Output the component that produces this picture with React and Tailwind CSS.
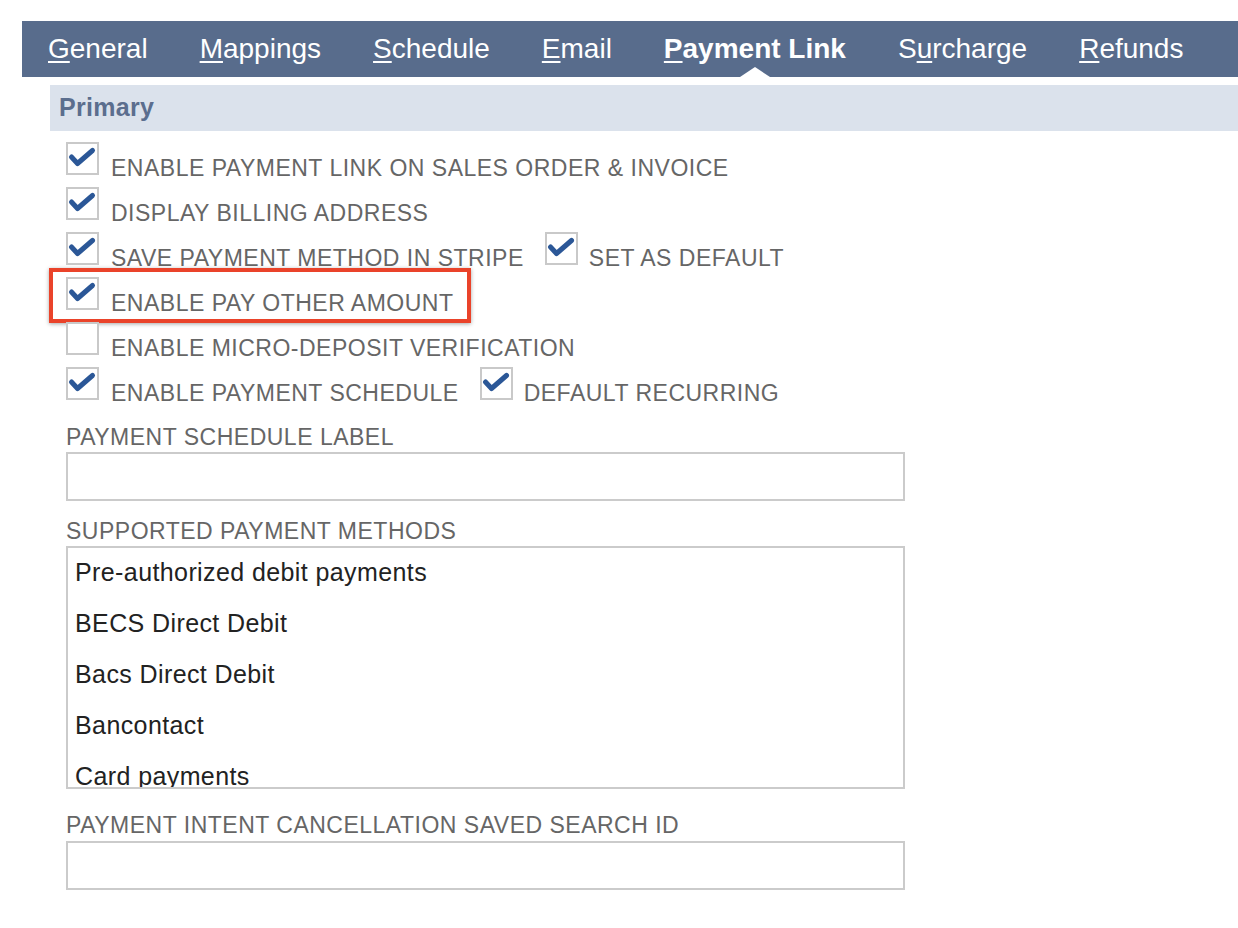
const tabs = [
  { pre: "", key: "G", rest: "eneral" },
  { pre: "", key: "M", rest: "appings" },
  { pre: "", key: "S", rest: "chedule" },
  { pre: "", key: "E", rest: "mail" },
  { pre: "", key: "P", rest: "ayment Link", active: true },
  { pre: "S", key: "u", rest: "rcharge" },
  { pre: "", key: "R", rest: "efunds" },
];

const methods = [
  "Pre-authorized debit payments",
  "BECS Direct Debit",
  "Bacs Direct Debit",
  "Bancontact",
  "Card payments",
];

function Box({ checked, className = "" }) {
  return (
    <span
      className={`w-[33px] h-[33px] shrink-0 border-2 border-[#c9c9c9] bg-white relative ${className}`}
    >
      {checked && (
        <svg
          viewBox="0 0 33 33"
          className="absolute -left-[2px] -top-[2px] w-[33px] h-[33px]"
        >
          <path
            d="M5.5 15 L11.5 21.5 L26.5 8.5"
            fill="none"
            stroke="#2b5797"
            strokeWidth="5"
            strokeLinecap="round"
            strokeLinejoin="round"
          />
        </svg>
      )}
    </span>
  );
}

function Row({ checked, label, extra, highlight }) {
  return (
    <div className="h-[45px] flex items-start relative">
      {highlight && (
        <div className="absolute -left-[17px] -top-[9px] w-[422px] h-[55px] border-4 border-[#ea432a] shadow-[0_1px_4px_rgba(0,0,0,0.35)]" />
      )}
      <Box checked={checked} />
      <span className="ml-[12px] mt-[15px] leading-none">{label}</span>
      {extra && (
        <>
          <Box checked={extra.checked} className="ml-[21px]" />
          <span className="ml-[11px] mt-[15px] leading-none">
            {extra.label}
          </span>
        </>
      )}
    </div>
  );
}

export default function App() {
  return (
    <div className="min-h-[928px] bg-white pt-[21px] pl-[22px] font-['Liberation_Sans',Arial,sans-serif]">
      <nav className="h-[56px] bg-[#586c8c] flex items-center gap-[52px] pl-[26px] text-white text-[28px]">
        {tabs.map((t) => (
          <div
            key={t.rest}
            className={`relative h-full flex items-center ${t.active ? "font-bold" : ""}`}
          >
            <span>
              {t.pre}
              <u className="underline-offset-[3px]">{t.key}</u>
              {t.rest}
            </span>
            {t.active && (
              <span className="absolute bottom-0 left-1/2 -translate-x-1/2 w-0 h-0 border-l-[15px] border-r-[15px] border-b-[10px] border-l-transparent border-r-transparent border-b-white" />
            )}
          </div>
        ))}
      </nav>

      <div className="ml-[28px] mt-[8px]">
        <div className="h-[46px] bg-[#dbe2ec] flex items-center pl-[9px] text-[25px] font-bold tracking-[0.3px] text-[#5b6e8e]">
          Primary
        </div>

        <div className="pl-[16px] pt-[11px] text-[23px] tracking-[0.5px] text-[#666]">
          <Row checked label="ENABLE PAYMENT LINK ON SALES ORDER & INVOICE" />
          <Row checked label="DISPLAY BILLING ADDRESS" />
          <Row
            checked
            label="SAVE PAYMENT METHOD IN STRIPE"
            extra={{ checked: true, label: "SET AS DEFAULT" }}
          />
          <Row checked highlight label="ENABLE PAY OTHER AMOUNT" />
          <Row label="ENABLE MICRO-DEPOSIT VERIFICATION" />
          <Row
            checked
            label="ENABLE PAYMENT SCHEDULE"
            extra={{ checked: true, label: "DEFAULT RECURRING" }}
          />

          <div className="mt-[14px] leading-none">PAYMENT SCHEDULE LABEL</div>
          <div className="mt-[3px] w-[839px] h-[49px] border-2 border-[#cbcbcb]" />

          <div className="mt-[19px] leading-none">SUPPORTED PAYMENT METHODS</div>
          <div className="mt-[3px] w-[839px] h-[243px] border-2 border-[#cbcbcb] overflow-hidden text-[25px] tracking-[0.4px] text-[#222]">
            {methods.map((m) => (
              <div key={m} className="h-[51px] leading-[51px] px-[7px] -translate-y-[1px]">
                {m}
              </div>
            ))}
          </div>

          <div className="mt-[25px] leading-none">
            PAYMENT INTENT CANCELLATION SAVED SEARCH ID
          </div>
          <div className="mt-[4px] w-[839px] h-[49px] border-2 border-[#cbcbcb]" />
        </div>
      </div>
    </div>
  );
}
